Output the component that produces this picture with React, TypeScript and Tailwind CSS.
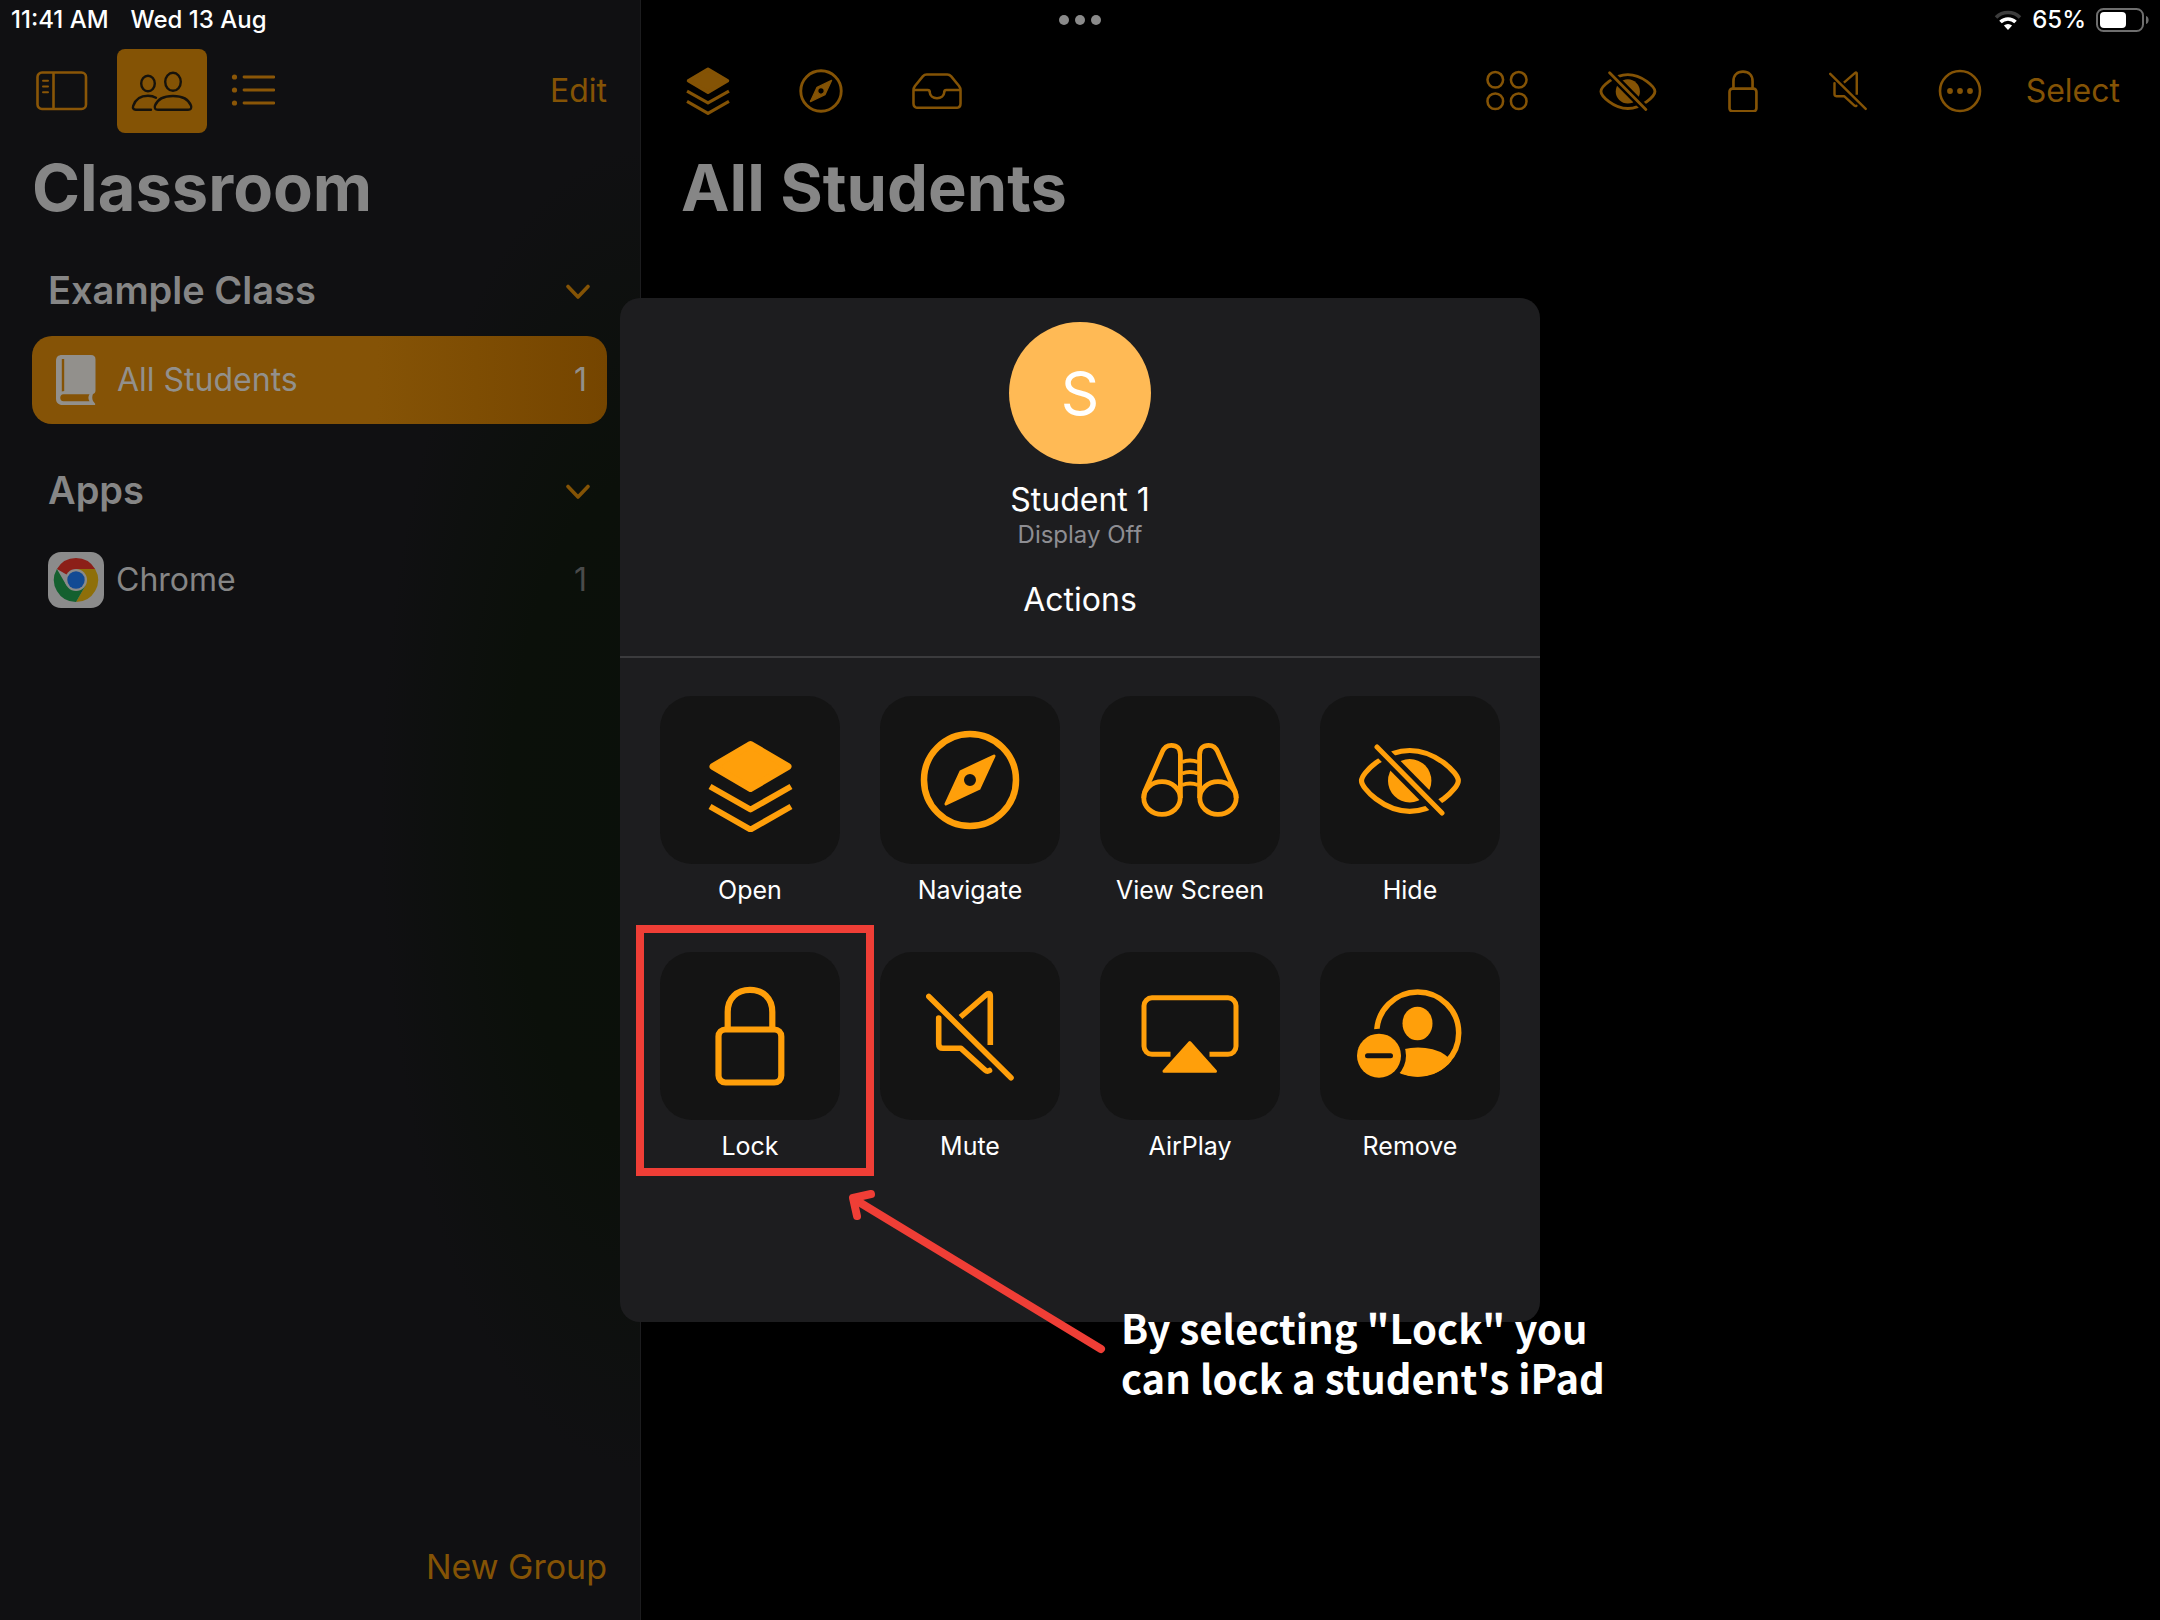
import React, { useId } from 'react';

type IconProps = { className?: string };

const LayersIcon: React.FC<IconProps> = ({ className }) => (
  <svg viewBox="0 0 85 92" fill="none" stroke="currentColor" strokeLinejoin="round" className={className} aria-hidden="true">
    <path d="M42.5 4.5 80 26.5 42.5 48.5 5 26.5Z" fill="currentColor" strokeWidth="7" />
    <path d="M2 46.5 42.5 69.5 83 46.5M2 66.5 42.5 89.5 83 66.5" strokeWidth="6" />
  </svg>
);

const CompassIcon: React.FC<IconProps> = ({ className }) => (
  <svg viewBox="0 0 100 100" fill="none" stroke="currentColor" className={className} aria-hidden="true">
    <circle cx="50" cy="50" r="46" strokeWidth="6.5" />
    <path
      d="M74 26 59 58.500 26 74 41 41.500ZM50 42.500a7.500 7.500 0 1 0 0 15 7.500 7.500 0 1 0 0-15Z"
      fill="currentColor"
      fillRule="evenodd"
      strokeWidth="3"
      strokeLinejoin="round"
    />
  </svg>
);

const TrayIcon: React.FC<IconProps> = ({ className }) => (
  <svg viewBox="0 0 51 37" fill="none" stroke="currentColor" strokeWidth="2.6" strokeLinejoin="round" className={className} aria-hidden="true">
    <path d="M1.500 17.500c0-2 .5-3 1.500-4.300l8-9.700c1.200-1.400 2-2 4-2h21c2 0 2.800.6 4 2l8 9.700c1 1.300 1.500 2.300 1.500 4.300v13.500c0 3-1.500 4.500-4.500 4.500h-39c-3 0-4.500-1.500-4.500-4.500Z" />
    <path d="M1.500 17.300h14.500c1.500 0 2 .7 2 2 .3 4 3.400 6.500 7.500 6.500s7.200-2.500 7.500-6.500c0-1.300.5-2 2-2h14.500" />
  </svg>
);

const BinocularsIcon: React.FC<IconProps> = ({ className }) => (
  <svg viewBox="0 0 98 76" fill="none" stroke="currentColor" strokeWidth="4.800" className={className} aria-hidden="true">
    <ellipse cx="21" cy="56" rx="18.200" ry="16.400" />
    <ellipse cx="77" cy="56" rx="18.200" ry="16.400" />
    <path d="M39.400 56V12.500c0-6-3.400-9.200-9-9.200-4.500 0-7.500 2.500-9.300 6.900L4 49c-1 2.500-1.200 5-1.200 7" />
    <path d="M58.600 56V12.500c0-6 3.400-9.200 9-9.200 4.500 0 7.500 2.500 9.300 6.900L94 49c1 2.500 1.200 5 1.200 7" />
    <path d="M41 20q8-3.200 16 0M41 31.500q8-3.200 16 0M41 43q8-3.200 16 0" strokeWidth="4" />
  </svg>
);

const HideIcon: React.FC<IconProps> = ({ className }) => {
  const id = useId();
  return (
    <svg viewBox="0 0 104 72" fill="none" stroke="currentColor" className={className} aria-hidden="true">
      <mask id={id} maskUnits="userSpaceOnUse" x="0" y="0" width="104" height="72">
        <rect width="104" height="72" fill="white" stroke="none" />
        <path d="M9-7 94 79" stroke="black" strokeWidth="14" />
      </mask>
      <g mask={`url(#${id})`}>
        <path
          d="M3.500 36.700C3.500 29 26 6.500 51.700 6.500S100.300 29 100.300 36.700 77.500 67.300 51.700 67.300 3.500 44.500 3.500 36.700Z"
          strokeWidth="5.200"
        />
        <circle cx="51.700" cy="36.700" r="21.700" fill="currentColor" stroke="none" />
      </g>
      <path d="M19 3 84 69" strokeWidth="5" strokeLinecap="round" />
    </svg>
  );
};

const LockIcon: React.FC<IconProps> = ({ className }) => (
  <svg viewBox="0 0 70 100" fill="none" stroke="currentColor" strokeWidth="6.200" className={className} aria-hidden="true">
    <rect x="3.500" y="43.500" width="62.800" height="53" rx="7" />
    <path d="M12.700 43V26C12.700 12 22 3.800 35 3.800S57.300 12 57.300 26V43" />
  </svg>
);

const MuteIcon: React.FC<IconProps> = ({ className }) => (
  <svg viewBox="0 0 88 92" fill="none" stroke="currentColor" strokeWidth="5.600" strokeLinejoin="round" className={className} aria-hidden="true">
    <path d="M2.800 6.500 85 87.700" strokeLinecap="round" />
    <path d="M34.500 27 60.500 4.500C62.500 2.800 64.300 3.500 64.300 6V55" />
    <path d="M12.700 28V54c0 2.800 1.500 4.300 4.300 4.300H35L59 80c1.500 1.300 3 1.500 4.500.5" strokeLinecap="round" />
  </svg>
);

const AirPlayIcon: React.FC<IconProps> = ({ className }) => (
  <svg viewBox="0 0 98 78" fill="none" stroke="currentColor" strokeWidth="5" className={className} aria-hidden="true">
    <path d="M29.500 59.300H11a8 8 0 0 1-8-8V10.800a8 8 0 0 1 8-8h76a8 8 0 0 1 8 8v40.500a8 8 0 0 1-8 8H68.500" />
    <path d="M48.800 47.500 74.500 76.300H23Z" fill="currentColor" strokeWidth="3" strokeLinejoin="round" />
  </svg>
);

const RemoveIcon: React.FC<IconProps> = ({ className }) => {
  const id = useId();
  return (
    <svg viewBox="0 0 105 92" fill="none" className={className} aria-hidden="true">
      <mask id={`${id}m`} maskUnits="userSpaceOnUse" x="0" y="0" width="105" height="92">
        <rect width="105" height="92" fill="white" />
        <circle cx="22" cy="67.700" r="27" fill="black" />
      </mask>
      <clipPath id={`${id}c`}>
        <circle cx="60.700" cy="45" r="43.700" />
      </clipPath>
      <g mask={`url(#${id}m)`}>
        <circle cx="60.700" cy="45" r="41" stroke="currentColor" strokeWidth="5.500" />
        <ellipse cx="60.500" cy="35.500" rx="15" ry="16.800" fill="currentColor" />
        <ellipse cx="61" cy="84" rx="38" ry="24.500" fill="currentColor" clipPath={`url(#${id}c)`} />
      </g>
      <circle cx="22" cy="67.700" r="22" fill="currentColor" />
      <path d="M10.500 67.700h23" stroke="#141414" strokeWidth="5" strokeLinecap="round" />
    </svg>
  );
};

const SidebarIcon: React.FC<IconProps> = ({ className }) => (
  <svg viewBox="0 0 52 40" fill="none" stroke="currentColor" strokeWidth="2.600" className={className} aria-hidden="true">
    <rect x="1.500" y="1.500" width="48.500" height="36.500" rx="4.500" />
    <path d="M17.500 1.500V38" />
    <path d="M7 9.800h5M7 15.500h5M7 21.200h5" strokeWidth="2" strokeLinecap="round" />
  </svg>
);

const PeopleIcon: React.FC<IconProps> = ({ className }) => (
  <svg viewBox="0 0 62 41" fill="none" stroke="currentColor" strokeWidth="2.400" strokeLinecap="round" strokeLinejoin="round" className={className} aria-hidden="true">
    <ellipse cx="17" cy="12.500" rx="6.800" ry="7.700" />
    <ellipse cx="42" cy="10.800" rx="7.800" ry="9" />
    <path d="M27 38.700c-3 0-3.800-1.500-3-4C26.300 28.500 33 25 42 25s15.700 3.500 18 9.700c.8 2.500 0 4-3 4Z" />
    <path d="M20 38.700H4.800c-2.500 0-3.300-1.500-2.600-3.800C4.400 28.200 9.800 24.700 17 24.700c3 0 5.800.7 8 2" />
  </svg>
);

const ListIcon: React.FC<IconProps> = ({ className }) => (
  <svg viewBox="0 0 44 34" fill="none" stroke="currentColor" strokeWidth="2.800" strokeLinecap="round" className={className} aria-hidden="true">
    <path d="M13 3h30M13 16h30M13 29h30" />
    <g fill="currentColor" stroke="none">
      <circle cx="3.500" cy="3" r="2.600" />
      <circle cx="3.500" cy="16" r="2.600" />
      <circle cx="3.500" cy="29" r="2.600" />
    </g>
  </svg>
);

const GridIcon: React.FC<IconProps> = ({ className }) => (
  <svg viewBox="0 0 43 42" fill="none" stroke="currentColor" strokeWidth="2.600" className={className} aria-hidden="true">
    <circle cx="9.500" cy="10" r="8" />
    <circle cx="33.500" cy="10" r="8" />
    <circle cx="9.500" cy="32" r="8" />
    <circle cx="33.500" cy="32" r="8" />
  </svg>
);

const MoreIcon: React.FC<IconProps> = ({ className }) => (
  <svg viewBox="0 0 44 44" fill="none" stroke="currentColor" strokeWidth="2.600" className={className} aria-hidden="true">
    <circle cx="22" cy="22" r="20" />
    <g fill="currentColor" stroke="none">
      <circle cx="12" cy="22" r="2.900" />
      <circle cx="22" cy="22" r="2.900" />
      <circle cx="32" cy="22" r="2.900" />
    </g>
  </svg>
);

const ChevronIcon: React.FC<IconProps> = ({ className }) => (
  <svg viewBox="0 0 26 16" fill="none" stroke="currentColor" strokeWidth="3.600" strokeLinecap="round" strokeLinejoin="round" className={className} aria-hidden="true">
    <path d="M3 2.500 13 13 23 2.500" />
  </svg>
);

const BookIcon: React.FC<IconProps> = ({ className }) => (
  <svg viewBox="0 0 40 50" className={className} aria-hidden="true">
    <path
      fill="currentColor"
      fillRule="evenodd"
      d="M6 0h29c3 0 4.500 1.500 4.500 4.500v31c0 2-.8 3-2.500 3.600-1 2.400-1 4.900 0 6.900l2 2.500c.5.800.3 1.500-.7 1.500H6.500C2.500 50 0 47.500 0 44V6c0-4 2-6 6-6ZM5.800 4v32.500c.8-.4 1.600-.5 2.400-.6V4ZM7.500 39.300c-4.300 0-4.300 7 0 7h26c-1.500-2-1.500-5 0-7Z"
    />
  </svg>
);

const ChromeIcon: React.FC<IconProps> = ({ className }) => (
  <svg viewBox="0 0 56 56" className={className} aria-hidden="true">
    <rect width="56" height="56" rx="13" fill="#8b8b8b" />
    <path d="M28 28 8.900 17A22 22 0 0 1 47.100 17H28Z" fill="#8c1f18" />
    <path d="M28 28 28 17H47.100A22 22 0 0 1 28 50L37.500 33.500Z" fill="#8e6f0a" />
    <path d="M28 28 37.500 33.500 28 50A22 22 0 0 1 8.900 17L18.500 33.500Z" fill="#14602f" />
    <circle cx="28" cy="28" r="11" fill="#8b8b8b" />
    <circle cx="28" cy="28" r="8.700" fill="#124a94" />
  </svg>
);

const WifiIcon: React.FC<IconProps> = ({ className }) => (
  <svg viewBox="0 0 28 20" fill="none" className={className} aria-hidden="true">
    <path d="M2 7.500A17 17 0 0 1 26 7.500" stroke="#3c3c3c" strokeWidth="3.600" />
    <path d="M6.500 12A10.700 10.700 0 0 1 21.500 12" stroke="currentColor" strokeWidth="3.600" />
    <path d="M14 20 9.900 15.600A6 6 0 0 1 18.100 15.600Z" fill="currentColor" />
  </svg>
);

const BatteryIcon: React.FC<IconProps> = ({ className }) => (
  <svg viewBox="0 0 53 24" fill="none" className={className} aria-hidden="true">
    <rect x="1" y="1" width="46" height="22" rx="6.500" stroke="#6e6e6e" strokeWidth="2" />
    <rect x="4" y="4" width="26" height="16" rx="4" fill="currentColor" />
    <path d="M50 8c3.500 1 3.500 7 0 8Z" fill="#6e6e6e" />
  </svg>
);

const actions = [
  { name: 'Open', icon: <LayersIcon className="mt-3 w-[85px]" /> },
  { name: 'Navigate', icon: <CompassIcon className="w-[100px]" /> },
  { name: 'View Screen', icon: <BinocularsIcon className="w-[98px]" /> },
  { name: 'Hide', icon: <HideIcon className="w-[104px]" /> },
  { name: 'Lock', icon: <LockIcon className="w-[70px]" />, highlighted: true },
  { name: 'Mute', icon: <MuteIcon className="w-[88px]" /> },
  { name: 'AirPlay', icon: <AirPlayIcon className="mb-1 w-[98px]" /> },
  { name: 'Remove', icon: <RemoveIcon className="mr-0.5 mb-1 w-[105px]" /> }
];

const leftTools = [
  { name: 'Open', icon: <LayersIcon className="w-[44px]" /> },
  { name: 'Navigate', icon: <CompassIcon className="w-[44px]" /> },
  { name: 'Inbox', icon: <TrayIcon className="w-[50px]" /> }
];

const rightTools = [
  { name: 'Groups', icon: <GridIcon className="w-[42px]" /> },
  { name: 'Hide', icon: <HideIcon className="w-[58px]" /> },
  { name: 'Lock', icon: <LockIcon className="w-[30px]" /> },
  { name: 'Mute', icon: <MuteIcon className="w-[38px]" /> },
  { name: 'More', icon: <MoreIcon className="w-[44px]" /> }
];

const StatusBar: React.FC = () => (
  <header className="absolute inset-x-0 top-0 grid h-10 grid-cols-[1fr_auto_1fr] items-center px-[11px] text-[24px] font-medium text-white">
    <div className="flex gap-[22px]">
      <span>11:41 AM</span>
      <span>Wed 13 Aug</span>
    </div>
    <div className="flex gap-[6px]">
      <span className="h-[10px] w-[10px] rounded-full bg-[#8a8a8a]" />
      <span className="h-[10px] w-[10px] rounded-full bg-[#8a8a8a]" />
      <span className="h-[10px] w-[10px] rounded-full bg-[#8a8a8a]" />
    </div>
    <div className="flex items-center justify-end gap-[10px]">
      <WifiIcon className="w-[28px]" />
      <span>65%</span>
      <BatteryIcon className="w-[53px]" />
    </div>
  </header>
);

const Sidebar: React.FC = () => (
  <aside className="flex w-[641px] shrink-0 flex-col border-r border-[#1c1c1e] bg-[#101012] bg-[radial-gradient(ellipse_260px_660px_at_100%_50%,#0a100a_0%,#0b100a_50%,#101012_100%)] pt-[49px] pr-[33px] pb-[33px] pl-8">
    <div className="flex items-center">
      <button type="button" aria-label="Toggle sidebar" className="ml-1 text-[#8a5607]">
        <SidebarIcon className="w-[52px]" />
      </button>
      <button type="button" aria-label="Students" className="ml-[29px] flex h-[84px] w-[90px] items-center justify-center rounded-lg bg-[#845305] text-[#15120c]">
        <PeopleIcon className="w-[62px]" />
      </button>
      <button type="button" aria-label="List" className="ml-6 text-[#8a5607]">
        <ListIcon className="w-[44px]" />
      </button>
      <button type="button" className="ml-auto text-[32px] text-[#845305]">Edit</button>
    </div>

    <h1 className="mt-4 text-[65px] leading-[78px] font-bold text-[#868686]">Classroom</h1>

    <div className="mt-[35px] flex flex-col gap-[38px]">
      {/* Classes */}
      <section className="flex flex-col gap-[18px]">
        <div className="flex h-14 items-center justify-between pr-4 pl-4">
          <h2 className="text-[38px] font-semibold text-[#868686]">Example Class</h2>
          <button type="button" aria-label="Collapse Example Class" className="pt-1 text-[#845305]">
            <ChevronIcon className="w-[26px]" />
          </button>
        </div>
        <button type="button" className="flex h-[88px] items-center rounded-[20px] bg-linear-to-r from-[#855306] from-60% to-[#754500] pr-5 pl-6 text-left text-[32px] text-[#92908c]">
          <BookIcon className="w-[40px]" />
          <span className="ml-[21px] flex-1">All Students</span>
          <span>1</span>
        </button>
      </section>

      {/* Apps */}
      <section className="flex flex-col gap-[18px]">
        <div className="flex h-14 items-center justify-between pr-4 pl-4">
          <h2 className="text-[38px] font-semibold text-[#868686]">Apps</h2>
          <button type="button" aria-label="Collapse Apps" className="pt-1 text-[#845305]">
            <ChevronIcon className="w-[26px]" />
          </button>
        </div>
        <button type="button" className="flex h-[88px] items-center pr-5 pl-4 text-left text-[32px] text-[#868686]">
          <ChromeIcon className="w-[56px]" />
          <span className="ml-3 flex-1">Chrome</span>
          <span className="text-[#4a4b4b]">1</span>
        </button>
      </section>
    </div>

    <button type="button" className="mt-auto self-end text-[34px] leading-10 text-[#845305]">New Group</button>
  </aside>
);

const ActionsDialog: React.FC = () => (
  <div role="dialog" aria-label="Student 1" className="relative w-[920px] rounded-[20px] bg-[#1d1d1f] pb-40 text-white">
    <div className="flex flex-col items-center border-b-2 border-[#3b3b3d] pt-6 pb-9">
      <div className="flex h-[142px] w-[142px] items-center justify-center rounded-full bg-[#ffba55] text-[60px]">S</div>
      <h2 className="mt-4 text-[32px] leading-10">Student 1</h2>
      <p className="text-[24px] leading-[30px] text-[#8e8e93]">Display Off</p>
      <h3 className="mt-[30px] text-[32px] leading-10">Actions</h3>
    </div>

    <div className="grid grid-cols-4 gap-x-10 gap-y-[46px] px-10 pt-[38px]">
      {actions.map((action) => (
        <button key={action.name} type="button" className="relative flex flex-col items-center gap-[10px] text-[#ff9f0a]">
          <span className="flex h-[168px] w-full items-center justify-center rounded-[32px] bg-[#141414]">{action.icon}</span>
          <span className="text-[25px] leading-8 whitespace-nowrap text-white">{action.name}</span>
          {action.highlighted && (
            <span className="pointer-events-none absolute -top-[27px] -right-[34px] -bottom-[14px] -left-6 z-10 border-8 border-[#ef3e36]" />
          )}
        </button>
      ))}
    </div>

    {/* Callout */}
    <svg viewBox="0 0 264 170" fill="none" stroke="#ef3e36" strokeWidth="8" strokeLinecap="round" strokeLinejoin="round" className="pointer-events-none absolute top-[888px] left-[225px] w-[264px]" aria-hidden="true">
      <path d="M9 13 256 163" />
      <path d="M26 8 8 12 12 30" />
    </svg>
    <p className="absolute top-[1004px] left-[501px] font-['Noto_Sans_CJK_SC',sans-serif] text-[40px] leading-[50px] font-bold whitespace-nowrap text-white">
      By selecting "Lock" you
      <br />
      can lock a student's iPad
    </p>
  </div>
);

const App: React.FC = () => {
  return (
    <div className="relative flex min-h-screen bg-black font-['Inter',sans-serif]">
      <Sidebar />

      <main className="flex-1 pt-[49px] pr-10 pl-10">
        <div className="flex h-[84px] items-center justify-between pl-[5px] text-[#845305]">
          <div className="flex items-center gap-[69px]">
            {leftTools.map((tool) => (
              <button key={tool.name} type="button" aria-label={tool.name}>{tool.icon}</button>
            ))}
          </div>
          <div className="flex items-center gap-11">
            <div className="flex items-center gap-[71px]">
              {rightTools.map((tool) => (
                <button key={tool.name} type="button" aria-label={tool.name}>{tool.icon}</button>
              ))}
            </div>
            <button type="button" className="text-[32px]">Select</button>
          </div>
        </div>
        <h1 className="mt-4 text-[65px] leading-[78px] font-bold text-[#868686]">All Students</h1>
      </main>

      <StatusBar />

      <div className="absolute inset-0 flex items-center justify-center">
        <ActionsDialog />
      </div>
    </div>
  );
};

export default App;
